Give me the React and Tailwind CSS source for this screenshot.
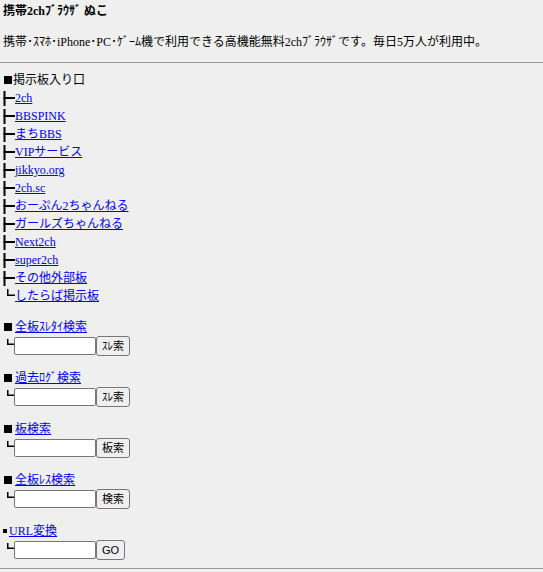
const links = [
  '2ch',
  'BBSPINK',
  'まちBBS',
  'VIPサービス',
  'jikkyo.org',
  '2ch.sc',
  'おーぷん2ちゃんねる',
  'ガールズちゃんねる',
  'Next2ch',
  'super2ch',
  'その他外部板',
  'したらば掲示板',
]

const searches = [
  { title: '全板ｽﾚﾀｲ検索', button: 'ｽﾚ索' },
  { title: '過去ﾛｸﾞ検索', button: 'ｽﾚ索' },
  { title: '板検索', button: '板索' },
  { title: '全板ﾚｽ検索', button: '検索' },
  { title: 'URL変換', button: 'GO', small: true },
]

function Branch({ last }) {
  if (last) {
    return (
      <svg width="12" height="18" className="shrink-0">
        <rect x="4" y="2" width="1.5" height="7" fill="#000" />
        <rect x="4" y="7.5" width="8" height="1.5" fill="#000" />
      </svg>
    )
  }
  return (
    <svg width="12" height="18" className="shrink-0">
      <rect x="0.5" y="2" width="2" height="15" fill="#000" />
      <rect x="0.5" y="8" width="11.5" height="2" fill="#000" />
    </svg>
  )
}

function SearchRow({ button }) {
  return (
    <div className="flex h-[20px] items-center">
      <svg width="11" height="20" className="shrink-0">
        <rect x="4" y="3" width="1.5" height="6" fill="#000" />
        <rect x="4" y="7.5" width="7" height="1.5" fill="#000" />
      </svg>
      <input
        type="text"
        className="h-[18px] w-[82px] rounded-[2px] border border-[#767676] bg-white px-[2px] outline-none"
      />
      <button
        type="button"
        className="h-[20px] rounded-[3px] border border-[#767676] bg-[#efefef] px-[5px] font-['Liberation_Sans','Noto_Sans_CJK_JP',sans-serif] text-[11px] leading-none text-black"
      >
        {button}
      </button>
    </div>
  )
}

export default function App() {
  return (
    <div className="min-h-screen bg-[#efefef] pt-[2px] font-['Liberation_Serif','Noto_Sans_CJK_JP',serif] text-[12px] leading-[18px] text-black">
      {/* Header */}
      <div className="px-[3px] font-bold">携帯2chﾌﾞﾗｳｻﾞ ぬこ</div>
      <p className="mt-[13px] px-[3px]">
        携帯･ｽﾏﾎ･iPhone･PC･ｹﾞｰﾑ機で利用できる高機能無料2chﾌﾞﾗｳｻﾞです。毎日5万人が利用中。
      </p>
      <div className="mt-[11px] h-px bg-[#9a9a9a]" />

      {/* Board list */}
      <div className="mt-[8px] px-[3px]">
        <div className="flex items-center">
          <span className="mr-[1px] ml-[1px] inline-block h-[8px] w-[8px] bg-black" />
          掲示板入り口
        </div>
        {links.map((name, i) => (
          <div key={name} className="flex h-[18px] items-center">
            <Branch last={i === links.length - 1} />
            <a href="#" className="text-[#0000ee] underline">
              {name}
            </a>
          </div>
        ))}
      </div>

      {/* Search forms */}
      <div className="px-[3px]">
        {searches.map((s) => (
          <div key={s.title} className="mt-[13px]">
            <div className="flex h-[18px] items-center">
              {s.small ? (
                <span className="mr-[2px] inline-block h-[4px] w-[4px] bg-black" />
              ) : (
                <span className="mr-[3px] ml-[1px] inline-block h-[8px] w-[8px] bg-black" />
              )}
              <a href="#" className="text-[#0000ee] underline">
                {s.title}
              </a>
            </div>
            <SearchRow button={s.button} />
          </div>
        ))}
      </div>
      <div className="mt-[8px] h-px bg-[#9a9a9a]" />
    </div>
  )
}
